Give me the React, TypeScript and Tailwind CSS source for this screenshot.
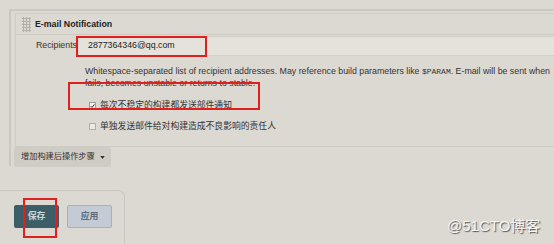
export default function App() {
  return (
    <div className="relative h-[244px] w-[554px] overflow-hidden bg-[#dcd9d2] font-['Liberation_Sans','Noto_Sans_CJK_SC',sans-serif] text-[8.8px] leading-none text-[#222]">
      {/* post-build section */}
      <section className="ml-[9px] mt-[9px] h-[157px] border-l-2 border-t-2 border-[#cbc8c0]">
        <div className="ml-[4px] mt-[2px] border-b border-l border-t border-[#cfccc4]">
          <div className="flex h-[21px] items-center border-b border-[#cfccc4]">
            <span className="ml-[6px] h-[15px] w-[9px] bg-[radial-gradient(#b3b0a9_1px,transparent_1.2px)] bg-[length:3px_3px]" />
            <span className="ml-[4px] text-[8.8px] font-bold text-[#222]">E-mail Notification</span>
          </div>

          <div className="flex h-[21px] items-center">
            <label className="w-[63px] pr-[2px] text-right text-[#333]">Recipients</label>
            <div className="flex h-[20px] flex-1 items-center border-y border-[#d3d0c9] bg-[#e5e2dc] pl-[9px] text-[#222]">
              2877364346@qq.com
            </div>
          </div>

          <p className="ml-[69px] mt-[10px] whitespace-nowrap leading-[11.5px] text-[#333]">
            Whitespace-separated list of recipient addresses. May reference build parameters like{" "}
            <code className="font-['Liberation_Mono',monospace] text-[8px]">$PARAM</code>. E-mail will be sent when
            <br />
            fails, becomes unstable or returns to stable.
          </p>

          <div className="ml-[73px] mt-[6px] flex h-[21px] items-center gap-[4px]">
            <span className="flex h-[7px] w-[7px] items-center justify-center border border-[#9c9a95] bg-[#f4f3f0]">
              <svg viewBox="0 0 8 8" className="h-[6px] w-[6px]">
                <path d="M1 4.2 L3.1 6.3 L7 1.5" fill="none" stroke="#222" strokeWidth="1.6" />
              </svg>
            </span>
            <span className="text-[#333]">每次不稳定的构建都发送部件通知</span>
          </div>
          <div className="ml-[73px] flex h-[20px] items-center gap-[4px]">
            <span className="h-[7px] w-[7px] border border-[#b0aea8] bg-[#ebe9e5]" />
            <span className="text-[#333]">单独发送邮件给对构建造成不良影响的责任人</span>
          </div>
          <div className="h-[10px]" />
        </div>

        <button className="ml-[3px] flex h-[20px] w-[97px] items-center gap-[5px] rounded-[2px] bg-[#cfccc4] pl-[7px] text-[8.2px] text-[#333]">
          增加构建后操作步骤
          <svg viewBox="0 0 6 4" className="h-[3px] w-[5px]">
            <path d="M0 0 H6 L3 4 Z" fill="#333" />
          </svg>
        </button>
      </section>

      {/* bottom bar */}
      <div className="mt-[24px] h-[60px] w-[125px] rounded-tr-[7px] border-r border-t border-[#c9c6be]">
        <div className="ml-[14px] mt-[14px] flex gap-[8px]">
          <button className="flex h-[23px] w-[45px] items-center justify-center rounded-[2px] bg-[#3c5f67] text-[8.8px] font-bold text-[#c9d6d8]">
            保存
          </button>
          <button className="flex h-[23px] w-[45px] items-center justify-center rounded-[2px] border border-[#a7b0bc] bg-[#c4cbd4] text-[8.8px] font-bold text-[#5d6b7c]">
            应用
          </button>
        </div>
      </div>

      {/* annotations */}
      <div className="absolute left-[76px] top-[36px] h-[21px] w-[131px] border-2 border-[#e0201e]" />
      <div className="absolute left-[68px] top-[82px] h-[28px] w-[192px] border-2 border-[#e0201e]" />
      <div className="absolute left-[23px] top-[198px] h-[40px] w-[34px] border-2 border-[#e0201e]" />

      <div className="absolute left-[447px] top-[218px] text-[15px] text-[#f6f6f4] [text-shadow:1px_1px_1px_#555]">
        @51CTO博客
      </div>
    </div>
  );
}
